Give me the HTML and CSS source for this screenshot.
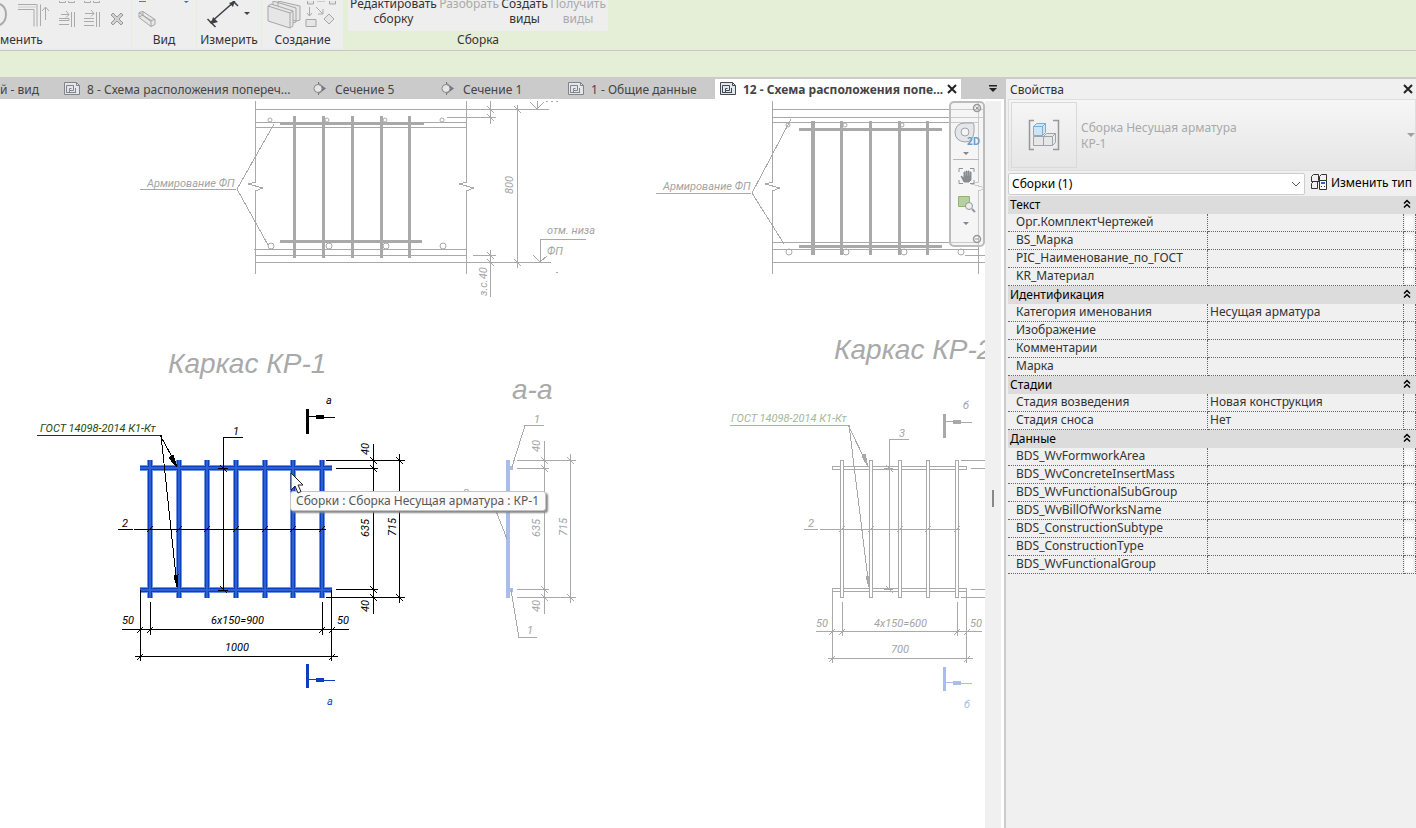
FILE: index.html
```html
<!DOCTYPE html>
<html lang="ru">
<head>
    <meta charset="utf-8">
    <title>Схема расположения</title>
    <link rel="stylesheet" href="styles.css">
</head>
<body>
    <!-- Лента -->
    <header class="ribbon">
        <section class="panel panel-edit">
            <div class="tools">
                <button class="tool" aria-label="Повернуть">
                    <svg width="12" height="30"><path d="M0 3 Q6 6 6 13 Q6 21 0 24" class="i-gray thick"/></svg>
                </button>
                <button class="tool" aria-label="Обрезать">
                    <svg width="40" height="30"><path d="M6 3.500h19v22M6 8.500h16v17M28.500 25V3.500M33.500 19V7M30 10l3.500-4 3.500 4" class="i-gray"/><path d="M6 6h18M25 3v22" class="i-gray dash"/></svg>
                </button>
                <button class="tool" aria-label="Выровнять">
                    <svg width="26" height="30"><path d="M7.500 0v1.500h6V0M16.500 0v1.500h6V0M9 13.500h8M14 10l3 3.500-3 3M7 19.500h10v-2h-10M7 23.500h10M19.500 11v15M22.500 11v15" class="i-gray"/></svg>
                </button>
                <button class="tool" aria-label="Выровнять несколько">
                    <svg width="26" height="30"><path d="M6.500 0v1.500h6V0M15.500 0v1.500h6V0M7 12.500h9M13 9l3 3.500-3 3M6 17.500h10M6 20.500h10M6 24.500h10M18.500 11v15M21.500 11v15" class="i-gray"/></svg>
                </button>
                <button class="tool" aria-label="Удалить">
                    <svg width="26" height="30"><path d="M7 14l2-2 4 4 4-4 2 2-4 4 4 4-2 2-4-4-4 4-2-2 4-4z" class="i-face dark"/></svg>
                </button>
            </div>
            <h2 class="panel-label label-cut">менить</h2>
        </section>
        <section class="panel panel-view">
            <div class="tools">
                <button class="tool" aria-label="Видимость">
                    <svg width="64" height="30"><path d="M7 0h7v1H7z" fill="#b5622c"/><path d="M52 0h5l-3 2z" fill="#1b78d0"/><path d="M7 11.500l4-1 12 8v5l-4 2-12-9zM7 11.500l12 8v6M19 19.500l4-1M11 10.500v4l8 6M7 16l4-2" class="i-face"/></svg>
                </button>
            </div>
            <h2 class="panel-label">Вид</h2>
        </section>
        <section class="panel panel-view">
            <div class="tools">
                <button class="tool" aria-label="Измерить">
                    <svg width="64" height="30"><path d="M13 22L38 0M10.500 18l8 8M33-3l8 8" stroke="#3d4047" stroke-width="1.500"/><path d="M14 23l2-7 5 5zM38 0l-2 6-4-4z" fill="#3d4047"/><path d="M47 11h6l-3 3z" fill="#444"/></svg>
                </button>
            </div>
            <h2 class="panel-label">Измерить</h2>
        </section>
        <section class="panel panel-create">
            <div class="tools">
                <button class="tool" aria-label="Создать группу">
                    <svg width="42" height="30"><path d="M16 0l22 5v14l-3 1L16 16zM11 0l23 7v14l-3 1-20-5z" class="i-face"/><path d="M6 5l3-2 22 7v15l-3 2-22-7zM6 5l22 7v15M28 12l3-2" class="i-face"/></svg>
                </button>
                <button class="tool" aria-label="Создать подобные">
                    <svg width="38" height="30"><path d="M3.500 0v3h6V0M25.500 0v3h6V0M2 18.500h10v7H2zM25 13l5 5-5 5-5-5z" class="i-face"/><path d="M13 0h8M5.500 6v9M3 12l2.500 3 2.500-3M12 6l7 7M19 8v5h-5" class="i-gray"/></svg>
                </button>
            </div>
            <h2 class="panel-label">Создание</h2>
        </section>
        <section class="panel panel-assembly">
            <div class="tools">
                <button class="tool tool-text">Редактировать<br>сборку</button>
                <button class="tool tool-text" disabled>Разобрать</button>
                <button class="tool tool-text">Создать<br>виды</button>
                <button class="tool tool-text" disabled>Получить<br>виды</button>
            </div>
            <h2 class="panel-label">Сборка</h2>
        </section>
    </header>
    <div class="options-bar"></div>

    <svg class="defs" width="0" height="0">
        <defs>
            <symbol id="sheet" viewBox="0 0 16 16">
                <path d="M.500 1.500h12l3 3v9h-15z" fill="#e3e6ea" stroke="currentColor"/>
                <path d="M12.500 1.500v3h3M2.500 11.500v-7h7v5h-4v2zM5.500 9.500v-2h2M11.500 12v-5M2.500 11.500h9" fill="none" stroke="currentColor"/>
            </symbol>
            <symbol id="section" viewBox="0 0 16 16">
                <path d="M6 1.500L14 7.500l-8 6z" fill="#77797d"/>
                <circle cx="6" cy="7.500" r="4" fill="#e6e6e6" stroke="#888a8e"/>
                <path d="M6.500 1v2M6.500 12v2" stroke="#777"/>
            </symbol>
            <symbol id="collapse" viewBox="0 0 8 10">
                <path d="M1 4.500l3-3 3 3M1 8.500l3-3 3 3" fill="none" stroke="#000" stroke-width="1.500"/>
            </symbol>
            <symbol id="close" viewBox="0 0 10 10">
                <path d="M1 1l8 8M9 1l-8 8" stroke="#222" stroke-width="2"/>
            </symbol>
        </defs>
    </svg>

    <div class="workspace">
        <main class="document">
            <nav class="tabs">
                <a class="tab tab-first" href="#">й - вид</a>
                <a class="tab tab-long" href="#"><svg class="icon"><use href="#sheet"/></svg><span>8 - Схема расположения попереч...</span></a>
                <a class="tab tab-short" href="#"><svg class="icon"><use href="#section"/></svg><span>Сечение 5</span></a>
                <a class="tab tab-short" href="#"><svg class="icon"><use href="#section"/></svg><span>Сечение 1</span></a>
                <a class="tab tab-mid" href="#"><svg class="icon"><use href="#sheet"/></svg><span>1 - Общие данные</span></a>
                <div class="tab tab-long active"><svg class="icon"><use href="#sheet"/></svg><span>12 - Схема расположения попе...</span><button class="close" aria-label="Закрыть вид"><svg><use href="#close"/></svg></button></div>
                <button class="tab-list" aria-label="Список видов"><svg width="10" height="8"><path d="M1 0h8v1.500H1zM1 3h8L5 7z" fill="#222"/></svg></button>
            </nav>
            <div class="view">
                <div class="canvas">
                    <svg class="drawing" width="100%" height="100%">
                        <defs>
                            <path id="tick" d="M-3 3L3-3"/>
                            <path id="vtick" d="M-4-4L3 3"/>
                            <path id="arrow" d="M0 0h13M13 1h13M7-1h7v3h-7z"/>
                            <path id="rods-blue" d="M140 468h192M140 590h192M150 460v138M179 460v138M207 460v138M236 460v138M265 460v138M293 460v138M322 460v138"/>
                        </defs>
                        <g transform="translate(0 -99)">
                            <!-- Сечение 1 -->
                            <g class="line gray">
                                <path d="M255.500 101V182l-7 2 14 4-7 3V274M466.500 101V182l-7 2 14 4-7 3V274"/>
                                <path d="M255 109.500H549M255 122.500H466M255 127.500H466M254 249.500H466M255 255.500H466M255 262.500H551"/>
                                <path class="bar" d="M280 123.500H424M280 241.500H422M294.500 116V258M323.500 116V258M352.500 116V258M381.500 116V258M409.500 116V258"/>
                                <path d="M140 189.500H236M237 189L274 124M237 189L268 245"/>
                                <path d="M447 117.500H496M490.500 101V124M517.500 105V268M473 255.500H496M490.500 250V297"/>
                                <path d="M530 102l7 7 7-7M537.500 101v8M533 255l7 7 7-6M540.500 262V239.500H586M546 101h2M551 101h2M556 101h2M556 272.500h2"/>
                                <use href="#vtick" x="491" y="110"/><use href="#vtick" x="491" y="118"/><use href="#vtick" x="518" y="110"/>
                                <use href="#vtick" x="491" y="256"/><use href="#vtick" x="491" y="263"/><use href="#vtick" x="518" y="263"/>
                                <circle cx="270" cy="120" r="2"/><circle cx="327" cy="120" r="2"/><circle cx="385" cy="120" r="2"/><circle cx="442" cy="120" r="2"/>
                                <circle cx="271" cy="246" r="3"/><circle cx="329" cy="246" r="3"/><circle cx="386" cy="246" r="3"/><circle cx="443" cy="246" r="3"/>
                            </g>
                            <g class="note light">
                                <text x="147" y="187">Армирование ФП</text>
                                <text x="547" y="234">отм. низа</text>
                                <text x="547" y="255">ФП</text>
                                <text transform="translate(513 194) rotate(-90)">800</text>
                                <text transform="translate(487 296) rotate(-90)">з.с.40</text>
                            </g>

                            <!-- Сечение 2 -->
                            <g class="line gray">
                                <path d="M772.500 101V182l-7 2 14 4-7 3V274M978.500 101V182l-7 2 14 4-7 3V274"/>
                                <path d="M772 109.500H985M772 117.500H985M772 122.500H978M772 242.500H978M772 249.500H978M772 262.500H985M965 255.500H985"/>
                                <path class="bar" d="M799 129.500H942M799 246.500H942M841.500 121V255M870.500 121V255M899.500 121V255M927.500 121V255"/>
                                <path class="bar wide-bar" d="M813 121V255"/>
                                <path d="M656 193.500H751M752 193L791 119M752 193L784 244"/>
                                <circle cx="788" cy="125" r="2"/><circle cx="845" cy="125" r="2"/><circle cx="902" cy="125" r="2"/>
                                <circle cx="789" cy="252" r="3"/><circle cx="846" cy="252" r="3"/><circle cx="904" cy="252" r="3"/><circle cx="961" cy="252" r="3"/>
                            </g>
                            <text class="note light" x="663" y="190">Армирование ФП</text>

                            <g class="title">
                                <text x="168" y="373">Каркас КР-1</text>
                                <text x="834" y="359">Каркас КР-2</text>
                                <text x="512" y="399">а-а</text>
                            </g>

                            <!-- Каркас КР-1 -->
                            <use href="#rods-blue" class="rod-edge"/>
                            <use href="#rods-blue" class="rod"/>
                            <use href="#rods-blue" class="rod-core"/>
                            <g class="line black">
                                <path class="weld" d="M37 435.500H160"/>
                                <path d="M160 435L177 466M161 435L177 586M243 437.500H223.500V590"/>
                                <path class="solid" d="M177 467l-8-9 4-3zM177 587l-3-11 4-1z"/>
                                <path d="M118 529.500H133M134 529.500H326M218 468.500h10M218 590.500h10"/>
                                <path d="M326 460.500H405M336 468.500H378M336 589.500H378M326 597.500H405M373.500 444V614M399.500 454V603"/>
                                <path d="M140.500 590V661M331.500 590V661M150.500 602V635M322.500 602V635M122 629.500H349M135 656.500H338"/>
                                <path class="bar" d="M307.500 409V434"/>
                                <use class="solid" href="#arrow" x="309" y="416"/>
                                <use href="#vtick" x="224" y="469"/><use href="#vtick" x="224" y="590"/>
                                <use href="#tick" x="150" y="529"/><use href="#tick" x="179" y="529"/><use href="#tick" x="207" y="529"/><use href="#tick" x="236" y="529"/><use href="#tick" x="265" y="529"/><use href="#tick" x="293" y="529"/><use href="#tick" x="322" y="529"/>
                                <use href="#tick" x="140" y="630"/><use href="#tick" x="150" y="630"/><use href="#tick" x="322" y="630"/><use href="#tick" x="332" y="630"/><use href="#tick" x="140" y="657"/><use href="#tick" x="332" y="657"/>
                                <use href="#vtick" x="374" y="461"/><use href="#vtick" x="374" y="469"/><use href="#vtick" x="374" y="590"/><use href="#vtick" x="374" y="598"/><use href="#vtick" x="400" y="461"/><use href="#vtick" x="400" y="598"/>
                            </g>
                            <g class="line blue">
                                <path class="bar" d="M307.500 664V688"/>
                                <use class="solid" href="#arrow" x="309" y="679"/>
                            </g>
                            <g class="note">
                                <text class="weld-text" x="40" y="432">ГОСТ 14098-2014 К1-Кт</text>
                                <text x="233" y="435">1</text>
                                <text x="122" y="527">2</text>
                                <text x="122" y="624">50</text>
                                <text x="337" y="624">50</text>
                                <text x="211" y="624">6х150=900</text>
                                <text x="225" y="651">1000</text>
                                <text transform="translate(369 455) rotate(-90)">40</text>
                                <text transform="translate(369 537) rotate(-90)">635</text>
                                <text transform="translate(396 536) rotate(-90)">715</text>
                                <text transform="translate(369 612) rotate(-90)">40</text>
                                <text x="326" y="404">а</text>
                                <text class="mark-blue" x="327" y="705">а</text>
                            </g>

                            <!-- Вид а-а -->
                            <path class="side" d="M506 460h4v6h3v4h-3v118h3v4h-3v6h-4z"/>
                            <g class="line gray">
                                <path d="M544 425.500H525L512 467M511 590L519 637.500H537M496 511L507 539"/>
                                <path d="M517 460.500H576M517 468.500H549M517 589.500H549M517 597.500H576M544.500 441V614M570.500 454V603"/>
                                <use href="#vtick" x="545" y="461"/><use href="#vtick" x="545" y="469"/><use href="#vtick" x="545" y="590"/><use href="#vtick" x="545" y="598"/><use href="#vtick" x="571" y="461"/><use href="#vtick" x="571" y="598"/>
                            </g>
                            <g class="note light">
                                <text x="534" y="423">1</text>
                                <text x="527" y="634">1</text>
                                <text x="463" y="497">2</text>
                                <text transform="translate(540 452) rotate(-90)">40</text>
                                <text transform="translate(540 537) rotate(-90)">635</text>
                                <text transform="translate(567 536) rotate(-90)">715</text>
                                <text transform="translate(540 612) rotate(-90)">40</text>
                            </g>

                            <!-- Каркас КР-2 -->
                            <g class="line gray">
                                <path class="weld-light" d="M730 425.500H848"/>
                                <path d="M832.500 466.500H967M832.500 469.500H967M832.500 466V470M966.500 466V470M832.500 588.500H967M832.500 591.500H967M832.500 588V663M966.500 588V663"/>
                                <path class="outline" d="M840.500 460.500h3v137h-3zM869.500 460.500h3v137h-3zM898.500 460.500h3v137h-3zM926.500 460.500h3v137h-3zM955.500 460.500h3v137h-3z"/>
                                <path d="M848 425L868 466M849 425L869 587M909 439.500H889.500V590M884 468.500h9M884 589.500h9"/>
                                <path class="solid" d="M868 467l-6-11 3-2zM869 587l-3-10 3-1z"/>
                                <path d="M804 529.500H818M820 529.500H960M961 460.500H985M971 468.500H985M971 589.500H985M961 597.500H985"/>
                                <path d="M842.500 602V636M957.500 602V636M816 631.500H982M828 658.500H973"/>
                                <path class="bar" d="M944.500 414V438"/>
                                <use class="solid" href="#arrow" x="946" y="421"/>
                                <use href="#vtick" x="890" y="469"/><use href="#vtick" x="890" y="590"/>
                                <use href="#tick" x="842" y="529"/><use href="#tick" x="871" y="529"/><use href="#tick" x="900" y="529"/><use href="#tick" x="928" y="529"/><use href="#tick" x="957" y="529"/>
                                <use href="#tick" x="832" y="632"/><use href="#tick" x="842" y="632"/><use href="#tick" x="957" y="632"/><use href="#tick" x="967" y="632"/><use href="#tick" x="832" y="659"/><use href="#tick" x="967" y="659"/>
                            </g>
                            <g class="line pale">
                                <path class="bar" d="M944.500 667V691"/>
                                <use class="solid" href="#arrow" x="946" y="682"/>
                            </g>
                            <g class="note light">
                                <text class="weld-text-light" x="731" y="422">ГОСТ 14098-2014 К1-Кт</text>
                                <text x="899" y="437">3</text>
                                <text x="808" y="527">2</text>
                                <text x="816" y="627">50</text>
                                <text x="970" y="627">50</text>
                                <text x="874" y="627">4х150=600</text>
                                <text x="891" y="653">700</text>
                                <text x="963" y="409">б</text>
                                <text class="mark-pale" x="964" y="708">б</text>
                            </g>
                        </g>
                    </svg>

                    <div class="navbar">
                        <svg width="36" height="146">
                            <circle cx="28" cy="7" r="3.500" fill="none" stroke="#999" stroke-width="1.500"/>
                            <path d="M26.500 5.500l3 3M29.500 5.500l-3 3" stroke="#999"/>
                            <path d="M16 22h7q2 0 2 2v7q-1 10-9 10-10-1-10-10 1-9 10-9z" fill="#e4e6e9" stroke="#a0a3a8"/>
                            <circle cx="16" cy="31" r="4" fill="#f4f4f4" stroke="#a0a3a8"/>
                            <text x="18" y="44" class="nav-2d">2D</text>
                            <path d="M14 51h6l-3 3zM14 121h6l-3 3z" fill="#85878c"/>
                            <path d="M4 58.500h26" stroke="#b8b8b8"/>
                            <path d="M10 71V67.500h4M21 67.500h4V71M10 79v3.500h4M21 82.500h4V79" fill="none" stroke="#8f9297"/>
                            <path d="M12 75l3 2v-6h1v4h1v-5h1v5h1v-5h1v5h1v-4h1v8l-2 2h-5z" fill="#888b90" stroke="#888b90"/>
                            <path d="M9.500 95.500h11v10h-11z" fill="#b7d09f" stroke="#8eb577"/>
                            <circle cx="20" cy="105" r="3.500" fill="#eee" stroke="#94979c"/>
                            <path d="M23 108l3 3" stroke="#94979c" stroke-width="2"/>
                            <circle cx="28" cy="138" r="3.500" fill="none" stroke="#999" stroke-width="1.500"/>
                            <path d="M26 138h4" stroke="#999"/>
                        </svg>
                    </div>
                    <div class="tooltip" role="tooltip">Сборки : Сборка Несущая арматура : КР-1</div>
                    <svg class="cursor" width="14" height="22"><path d="M1 1v17l4-4 3 7 3-1.500-3-6.500h5z" fill="#fff" stroke="#222"/></svg>
                </div>
                <div class="scroll"><div class="thumb"></div></div>
            </div>
        </main>

        <!-- Свойства -->
        <aside class="properties">
            <div class="prop-title"><h2>Свойства</h2><button class="close" aria-label="Закрыть"><svg><use href="#close"/></svg></button></div>
            <div class="type">
                <div class="preview">
                    <svg width="32" height="32">
                        <path d="M6 1.500H1.500v29H6M25 1.500h5.500v29H25" fill="none" stroke="#96989b" stroke-width="1.500"/>
                        <path d="M5.500 17.500h10v9h-10zM15.500 17.500h9v9h-9zM15.500 17.500l3-3h9l-3 3M24.500 26.500l3-3v-9" fill="#e6e7e9" stroke="#a0a2a6"/>
                        <path d="M5.500 7.500h9v9h-9zM5.500 7.500l3-3h9l-3 3zM14.500 16.500l3-3v-9l-3 3z" fill="#cfe4f2" stroke="#80add0"/>
                    </svg>
                </div>
                <div class="type-name">Сборка Несущая арматура<br>КР-1</div>
                <svg class="type-caret" width="8" height="5"><path d="M0 0h8L4 4z" fill="#a0a0a0"/></svg>
            </div>
            <div class="filter">
                <select class="filter-select" aria-label="Категория"><option>Сборки (1)</option></select>
                <button class="edit-type">
                    <svg width="16" height="16"><path d="M.500 2.500l2-2h5v6l-1 1h-6zM8.500 2.500l2-2h5v6M.500 9.500l2-2h5M.500 9.500v5h6v-7M.500 7.500h8v-5" fill="none" stroke="#333"/><path d="M8.500 6.500h7v9h-7z" fill="#fff" stroke="#333"/><path d="M10 8h4v2h-4z" fill="#1671c9"/><path d="M10 12h1v1h-1zM13 12h1v1h-1z" fill="#333"/></svg>
                    Изменить тип
                </button>
            </div>
            <table class="props">
                <colgroup><col class="c-name"><col><col class="c-btn"></colgroup>
                <tbody>
                    <tr class="group"><th colspan="3"><div>Текст<svg><use href="#collapse"/></svg></div></th></tr>
                    <tr><td>Орг.КомплектЧертежей</td><td></td><td><button class="assoc" aria-label="Связать"></button></td></tr>
                    <tr><td>BS_Марка</td><td></td><td><button class="assoc" aria-label="Связать"></button></td></tr>
                    <tr><td>PIC_Наименование_по_ГОСТ</td><td></td><td><button class="assoc" aria-label="Связать"></button></td></tr>
                    <tr><td>KR_Материал</td><td></td><td><button class="assoc" aria-label="Связать"></button></td></tr>
                </tbody>
                <tbody>
                    <tr class="group"><th colspan="3"><div>Идентификация<svg><use href="#collapse"/></svg></div></th></tr>
                    <tr><td>Категория именования</td><td>Несущая арматура</td><td></td></tr>
                    <tr><td>Изображение</td><td></td><td></td></tr>
                    <tr><td>Комментарии</td><td></td><td></td></tr>
                    <tr><td>Марка</td><td></td><td></td></tr>
                </tbody>
                <tbody>
                    <tr class="group"><th colspan="3"><div>Стадии<svg><use href="#collapse"/></svg></div></th></tr>
                    <tr><td>Стадия возведения</td><td>Новая конструкция</td><td></td></tr>
                    <tr><td>Стадия сноса</td><td>Нет</td><td></td></tr>
                </tbody>
                <tbody>
                    <tr class="group"><th colspan="3"><div>Данные<svg><use href="#collapse"/></svg></div></th></tr>
                    <tr><td>BDS_WvFormworkArea</td><td></td><td><button class="assoc" aria-label="Связать"></button></td></tr>
                    <tr><td>BDS_WvConcreteInsertMass</td><td></td><td><button class="assoc" aria-label="Связать"></button></td></tr>
                    <tr><td>BDS_WvFunctionalSubGroup</td><td></td><td><button class="assoc" aria-label="Связать"></button></td></tr>
                    <tr><td>BDS_WvBillOfWorksName</td><td></td><td><button class="assoc" aria-label="Связать"></button></td></tr>
                    <tr><td>BDS_ConstructionSubtype</td><td></td><td><button class="assoc" aria-label="Связать"></button></td></tr>
                    <tr><td>BDS_ConstructionType</td><td></td><td><button class="assoc" aria-label="Связать"></button></td></tr>
                    <tr><td>BDS_WvFunctionalGroup</td><td></td><td><button class="assoc" aria-label="Связать"></button></td></tr>
                </tbody>
            </table>
        </aside>
    </div>
</body>
</html>
```

FILE: styles.css
```css
* {
    box-sizing: border-box;
}
body {
    margin: 0;
    height: 100vh;
    display: flex;
    flex-direction: column;
    overflow: hidden;
    font-family: "Noto Sans", "Open Sans", sans-serif;
    font-size: 12px;
    line-height: 15px;
    color: #333;
    background: #fff;
}
button {
    padding: 0;
    border: none;
    background: none;
    font: inherit;
    color: inherit;
}
h2 {
    margin: 0;
    font-size: 12px;
    font-weight: normal;
}
svg {
    display: block;
}
.defs {
    position: absolute;
}

/* ribbon */
.ribbon {
    display: flex;
    height: 51px;
    flex-shrink: 0;
    padding-bottom: 1px;
    background: #e5efd8;
    border-bottom: 1px solid #c8c8c8;
    overflow: hidden;
}
.panel {
    display: flex;
    flex-direction: column;
    flex-shrink: 0;
    margin-right: 1px;
    background: #eee;
}
.panel-edit {
    width: 131px;
}
.panel-view {
    width: 64px;
}
.panel-create {
    width: 81px;
    margin-right: 5px;
}
.panel-assembly {
    width: 260px;
}
.tools {
    display: flex;
    height: 31px;
}
.panel-assembly .tools {
    justify-content: space-between;
    padding: 0 2px;
}
.tool-text {
    height: 30px;
    margin-top: -4px;
    display: flex;
    justify-content: center;
    text-align: center;
    white-space: nowrap;
}
.tool-text:disabled {
    color: #aaa;
}
.panel-label {
    height: 18px;
    line-height: 18px;
    text-align: center;
}
.label-cut {
    text-align: left;
}
.panel-assembly .panel-label {
    background: #e5efd8;
}
.i-gray {
    fill: none;
    stroke: #aaa;
}
.i-gray.thick {
    stroke-width: 2;
}
.i-gray.dash {
    stroke: #ccc;
}
.i-face {
    fill: #e6e6e6;
    stroke: #a6a6a6;
}
.i-face.dark {
    fill: #d0d0d0;
    stroke: #999;
}
.options-bar {
    height: 26px;
    flex-shrink: 0;
    background: #e5efd8;
}

/* documents */
.workspace {
    display: flex;
    flex: 1;
    min-height: 0;
}
.document {
    display: flex;
    flex-direction: column;
    flex: 1;
    min-width: 0;
}
.tabs {
    display: flex;
    height: 22px;
    padding-top: 2px;
    flex-shrink: 0;
    background: #cbcbcb;
}
.tab {
    display: flex;
    align-items: center;
    gap: 7px;
    padding-left: 5px;
    color: #444;
    text-decoration: none;
    white-space: nowrap;
}
.tab span {
    flex: 1;
}
.tab-first {
    width: 59px;
    padding-left: 0;
}
.tab-long {
    width: 248px;
}
.tab-short {
    width: 128px;
}
.tab-mid {
    width: 152px;
}
.tab.active {
    width: 246px;
    padding-right: 4px;
    background: #fff;
    font-weight: bold;
}
.tab .close {
    margin-left: -4px;
}
.icon {
    width: 16px;
    height: 16px;
    flex-shrink: 0;
    color: #808388;
}
.active .icon {
    color: #3f4956;
}
.close svg {
    width: 10px;
    height: 10px;
}
.tab-list {
    margin-left: auto;
    margin-right: 6px;
}
.view {
    display: flex;
    flex: 1;
    min-height: 0;
}
.canvas {
    position: relative;
    flex: 1;
    overflow: hidden;
}
.scroll {
    display: flex;
    align-items: center;
    justify-content: center;
    width: 16px;
    margin: 2px 3px 0 0;
    background: #f0f0f0;
}
.thumb {
    width: 2px;
    height: 17px;
    margin-top: 68px;
    background: #888;
}

/* drawing */
.line {
    fill: none;
    stroke-width: 1;
    shape-rendering: crispEdges;
}
.line circle {
    shape-rendering: geometricPrecision;
}
.gray {
    stroke: #a9a9a9;
}
.black {
    stroke: #000;
}
.blue {
    stroke: #0a3fc0;
}
.pale {
    stroke: #a9bcea;
}
.bar {
    stroke-width: 3;
}
.wide-bar {
    stroke-width: 4;
}
.outline {
    fill: #fff;
}
.black .solid {
    fill: #000;
}
.gray .solid {
    fill: #a9a9a9;
}
.blue .solid {
    fill: #0a3fc0;
}
.pale .solid {
    fill: #a9bcea;
}
.weld {
    stroke: #143f08;
}
.weld-light {
    stroke: #a3b89c;
}
.rod-edge, .rod, .rod-core {
    fill: none;
    shape-rendering: crispEdges;
}
.rod-edge {
    stroke: #7396e4;
    stroke-width: 6;
}
.rod {
    stroke: #0a3fc0;
    stroke-width: 4;
}
.rod-core {
    stroke: #2f60d0;
    stroke-width: 2;
}
.side {
    fill: #a9bcea;
}
.note {
    font-family: Roboto, "Liberation Sans", sans-serif;
    font-style: italic;
    font-size: 11px;
    fill: #000;
}
.light {
    fill: #a3a3a3;
}
.weld-text {
    fill: #1c4a10;
}
.weld-text-light {
    fill: #a3b89c;
}
.mark-blue {
    fill: #0a3fc0;
}
.mark-pale {
    fill: #a9bcea;
}
.title {
    font-family: "Liberation Sans", sans-serif;
    font-style: italic;
    font-size: 28px;
    fill: #a9a9a9;
}
.navbar {
    position: absolute;
    top: 2px;
    right: 0;
    width: 36px;
    height: 146px;
    border-radius: 5px;
    background: rgba(235, 235, 235, 0.5);
    box-shadow: inset 0 0 0 2px #bcbcbc;
}
.nav-2d {
    font-size: 10px;
    fill: #6f9bc8;
    font-weight: bold;
}
.tooltip {
    position: absolute;
    left: 290px;
    top: 392px;
    padding: 1px 6px 2px 5px;
    border: 1px solid #c4c4c4;
    border-radius: 3px;
    background: #fbfbfb;
    box-shadow: 2px 2px 2px #888;
    color: #575757;
    white-space: nowrap;
}
.cursor {
    position: absolute;
    left: 290px;
    top: 373px;
}

/* properties */
.properties {
    width: 412px;
    flex-shrink: 0;
    border-top: 2px solid #cbcbcb;
    border-left: 2px solid #cbcbcb;
    background: #f0f0f0;
}
.prop-title {
    display: flex;
    align-items: center;
    justify-content: space-between;
    height: 20px;
    padding: 0 3px 0 4px;
}
.type {
    display: flex;
    align-items: center;
    height: 72px;
    margin-left: 2px;
    padding: 0 0 0 2px;
    border: 1px solid #dedede;
    background: linear-gradient(#f6f6f6, #e6e6e6);
    color: #a9a9a9;
}
.preview {
    display: flex;
    align-items: center;
    justify-content: center;
    width: 66px;
    height: 66px;
    border: 1px solid #d9d9d9;
}
.type-name {
    flex: 1;
    padding: 2px 0 0 4px;
    line-height: 16px;
}
.filter {
    display: flex;
    align-items: center;
    height: 25px;
    margin-left: 2px;
    color: #000;
}
.filter-select {
    flex: 1;
    height: 22px;
    padding: 0 3px;
    appearance: none;
    border: 1px solid #ccc;
    border-radius: 2px;
    background: #fff url("data:image/svg+xml,%3Csvg xmlns='http://www.w3.org/2000/svg' width='10' height='6'%3E%3Cpath d='M1 1l4 4 4-4' fill='none' stroke='%23555'/%3E%3C/svg%3E") no-repeat right 3px center;
    font: inherit;
    color: inherit;
}
.edit-type {
    display: flex;
    align-items: center;
    gap: 4px;
    padding: 0 4px 3px 6px;
    white-space: nowrap;
}
.props {
    width: 408px;
    margin-left: 2px;
    table-layout: fixed;
    border-collapse: separate;
    border-spacing: 0;
}
.c-name {
    width: 200px;
}
.c-btn {
    width: 12px;
}
.props td, .props th {
    height: 18px;
    padding: 0 0 2px 2px;
    line-height: 15px;
    white-space: nowrap;
}
.props td {
    border-right: 1px dotted #666;
    border-bottom: 1px dotted #666;
}
.props td:first-child {
    padding-left: 8px;
}
.props td:last-child {
    padding: 0 0 0 1px;
}
.group th {
    background: #dcdcdc;
    color: #000;
    font-weight: normal;
    text-align: left;
}
.group div {
    display: flex;
    align-items: center;
    justify-content: space-between;
}
.group svg {
    width: 8px;
    height: 10px;
    margin-right: 5px;
}
.assoc {
    display: block;
    width: 8px;
    height: 14px;
    border-radius: 3px;
    background: #fafafa;
}
```
